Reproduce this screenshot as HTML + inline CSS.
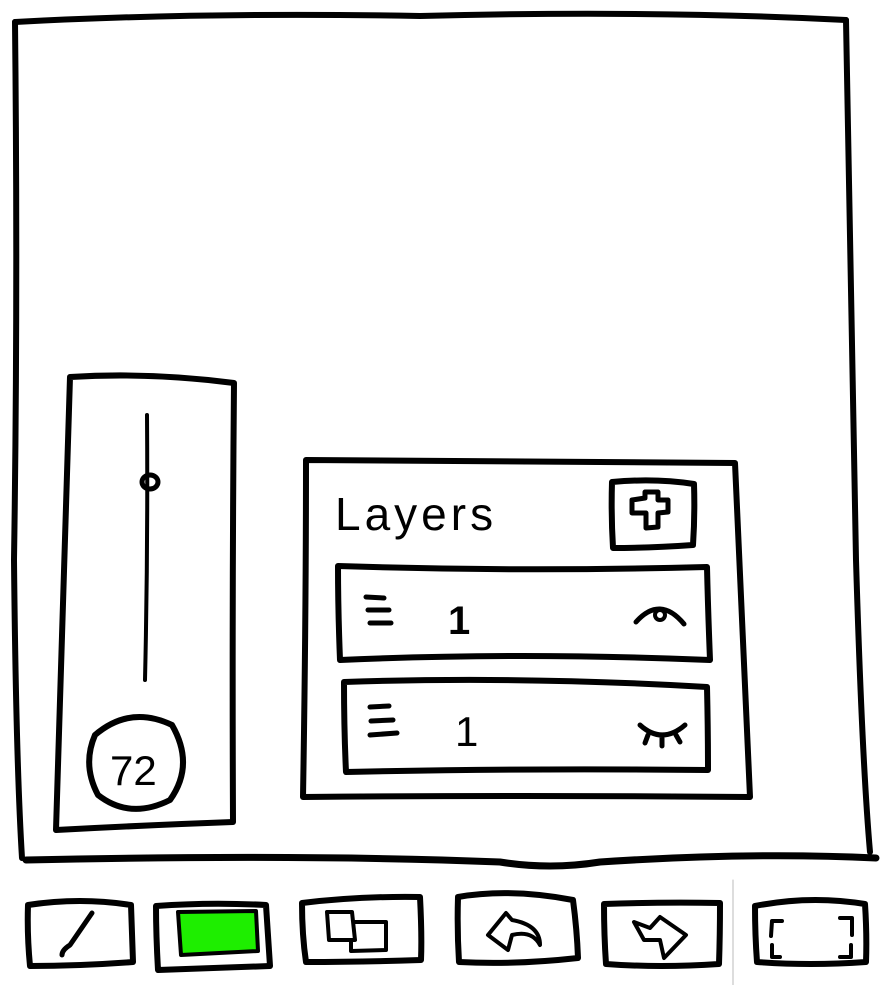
<!DOCTYPE html>
<html><head><meta charset="utf-8"><style>
html,body{margin:0;padding:0;background:#fff;width:882px;height:985px;overflow:hidden}
svg{display:block}
text{font-family:"Liberation Sans",sans-serif;fill:#000}
</style></head><body>
<svg width="882" height="985" viewBox="0 0 882 985" fill="none" stroke="#000" stroke-linecap="round" stroke-linejoin="round">
<path d="M15 22 Q200 12 420 16 Q650 10 846 20" stroke-width="6"/>
<path d="M15 22 Q18 300 14 560 Q16 760 22 858" stroke-width="6"/>
<path d="M846 20 Q852 300 856 560 Q862 760 870 852" stroke-width="6"/>
<path d="M26 860 Q300 854 500 862 Q550 870 600 862 Q750 852 876 858" stroke-width="7"/>
<path d="M70 377 Q150 372 234 383 Q232 600 233 822 Q150 825 56 830 Q64 600 70 377Z" stroke-width="6"/>
<path d="M147 415 Q148 550 145 680" stroke-width="4"/>
<ellipse cx="150" cy="482" rx="8" ry="7" stroke-width="5"/>
<path d="M95 735 Q130 705 172 725 Q195 765 170 800 Q130 820 98 795 Q82 765 95 735Z" stroke-width="6"/>
<text x="110" y="785" font-size="42" stroke="none">72</text>
<path d="M306 460 Q520 462 735 463 Q742 620 750 797 Q520 795 303 797 Q306 620 306 460Z" stroke-width="6"/>
<text x="335" y="530" font-size="46" stroke="none" letter-spacing="4">Layers</text>
<path d="M612 482 Q655 478 694 484 Q695 515 693 545 Q650 548 613 548 Q611 515 612 482Z" stroke-width="6"/>
<path d="M632 500 L645 498 L645 492 L658 492 L658 500 L668 500 L668 512 L658 513 L658 527 L646 528 L646 513 L632 513Z" stroke-width="5"/>
<path d="M338 566 Q520 572 707 567 Q708 610 710 660 Q520 652 340 660 Q338 610 338 566Z" stroke-width="6"/>
<path d="M366 597 L384 598 M368 610 L389 610 M370 623 L391 623" stroke-width="5"/>
<text x="448" y="634" font-size="40" font-weight="bold" stroke="none">1</text>
<path d="M636 622 Q660 595 684 624" stroke-width="5"/>
<circle cx="660" cy="615" r="5" stroke-width="4"/>
<path d="M344 682 Q520 676 707 687 Q708 730 708 770 Q520 768 346 772 Q344 730 344 682Z" stroke-width="6"/>
<path d="M370 707 L389 706 M371 721 L393 720 M370 735 L397 733" stroke-width="5"/>
<text x="455" y="746" font-size="42" stroke="none">1</text>
<path d="M640 725 Q662 745 685 725 M648 735 L645 743 M662 738 L662 746 M676 735 L680 742" stroke-width="5"/>
<path d="M28 905 Q80 897 131 905 Q132 935 133 962 Q80 966 30 966 Q27 935 28 905Z" stroke-width="6"/>
<path d="M92 913 L70 945 M70 945 Q62 950 62 955" stroke-width="5"/>
<path d="M156 906 Q210 902 266 905 Q268 935 270 966 Q210 968 158 970 Q156 935 156 906Z" stroke-width="6"/>
<path d="M178 912 L256 911 L258 951 L181 955Z" fill="#1eee00" stroke-width="4"/>
<path d="M302 903 Q360 896 420 897 Q422 935 421 960 Q360 962 306 962 Q302 935 302 903Z" stroke-width="6"/>
<path d="M327 912 L352 912 L355 940 L329 940Z M355 922 L386 922 L386 950 L351 951 L351 940" stroke-width="4"/>
<path d="M458 897 Q510 888 573 900 Q577 930 578 958 Q515 965 459 962 Q457 930 458 897Z" stroke-width="6"/>
<path d="M506 913 L488 935 L508 950 L512 935 Q532 930 540 945 Q540 925 512 920Z" stroke-width="4"/>
<path d="M604 904 Q660 902 720 903 Q720 935 719 964 Q660 968 606 964 Q604 935 604 904Z" stroke-width="6"/>
<path d="M634 922 L650 928 L660 917 L686 935 L664 958 L660 940 L644 940Z" stroke-width="4"/>
<path d="M733 880 L733 985" stroke="#bbb" stroke-width="1"/>
<path d="M755 906 Q810 895 865 904 Q867 935 866 962 Q810 966 757 962 Q755 935 755 906Z" stroke-width="6"/>
<path d="M782 921 L772 921 L771 936 M840 918 L852 918 L852 935 M772 945 L772 957 L780 957 M851 945 L851 957 L840 957" stroke-width="4"/>
</svg>
</body></html>
